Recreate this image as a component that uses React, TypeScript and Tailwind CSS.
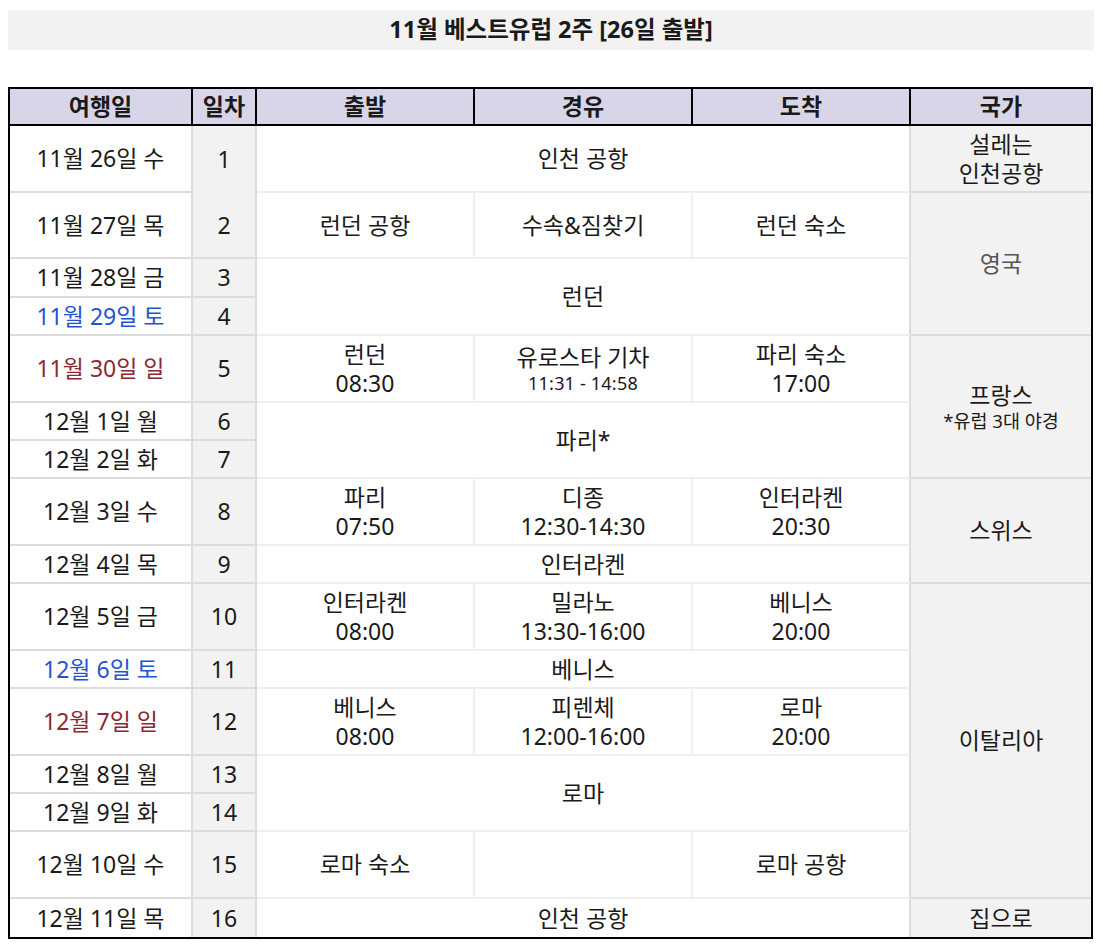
import type { ReactNode } from "react"

type Tone = "black" | "blue" | "red"

const toneClass: Record<Tone, string> = {
  black: "text-[#1a1a1a]",
  blue: "text-[#2354d0]",
  red: "text-[#8c2833]",
}

// base cell: right + bottom borders only, outer frame comes from the table
function Cell({
  children,
  colSpan,
  rowSpan,
  className = "",
}: {
  children?: ReactNode
  colSpan?: number
  rowSpan?: number
  className?: string
}) {
  return (
    <td
      colSpan={colSpan}
      rowSpan={rowSpan}
      className={`p-0 text-center align-middle ${className}`}
    >
      {children}
    </td>
  )
}

function Two({ top, bottom, small }: { top: string; bottom: string; small?: boolean }) {
  return (
    <div className="flex flex-col items-center leading-[29px]">
      <span>{top}</span>
      {small ? (
        <span className="text-[18px] leading-[22px] tracking-[0.2px]">{bottom}</span>
      ) : (
        <span>{bottom}</span>
      )}
    </div>
  )
}

const dateCls = "border-r-2 border-b-2 border-[#dcdcdc]"
const dayCls = "border-r-2 border-b-2 border-[#dcdcdc] bg-[#f2f2f2]"
const midCls = "border-r-2 border-b-2 border-[#efefef]"
const lastMidCls = "border-r-2 border-b-2 border-r-[#dcdcdc] border-b-[#efefef]"
const countryCls = "border-b-2 border-[#dcdcdc] bg-[#f2f2f2]"

function DateCell({ text, tone = "black", h }: { text: string; tone?: Tone; h: string }) {
  return <Cell className={`${dateCls} ${toneClass[tone]} ${h}`}>{text}</Cell>
}

export default function App() {
  return (
    <div
      className="min-h-[946px] bg-white px-2 pt-[10px] text-[#1a1a1a]"
      style={{ fontFamily: '"Noto Sans", "Noto Sans CJK KR", sans-serif' }}
    >
      {/* Title */}
      <div className="flex h-10 items-center justify-center bg-[#f2f2f2] text-[23.5px] font-bold">
        11월 베스트유럽 2주 [26일 출발]
      </div>

      {/* Schedule */}
      <table className="mt-[37px] w-[1085px] table-fixed border-separate border-spacing-0 border-2 border-black text-[23px]">
        <colgroup>
          <col className="w-[183px]" />
          <col className="w-[64px]" />
          <col className="w-[218px]" />
          <col className="w-[218px]" />
          <col className="w-[218px]" />
          <col className="w-[180px]" />
        </colgroup>
        <thead>
          <tr className="bg-[#d9d5e8] font-bold">
            <th className="h-[37px] border-r-2 border-b-2 border-black p-0">여행일</th>
            <th className="border-r-2 border-b-2 border-black p-0">일차</th>
            <th className="border-r-2 border-b-2 border-black p-0">출발</th>
            <th className="border-r-2 border-b-2 border-black p-0">경유</th>
            <th className="border-r-2 border-b-2 border-black p-0">도착</th>
            <th className="border-b-2 border-black p-0">국가</th>
          </tr>
        </thead>
        <tbody>
          <tr>
            <DateCell text="11월 26일 수" h="h-[67px]" />
            <Cell className="border-r-2 border-[#dcdcdc] bg-[#f2f2f2]">1</Cell>
            <Cell colSpan={3} className={lastMidCls}>인천 공항</Cell>
            <Cell className={countryCls}>
              <div className="leading-[29px]">
                설레는
                <br />
                인천공항
              </div>
            </Cell>
          </tr>
          <tr>
            <DateCell text="11월 27일 목" h="h-[66px]" />
            <Cell className={dayCls}>2</Cell>
            <Cell className={midCls}>런던 공항</Cell>
            <Cell className={midCls}>수속&amp;짐찾기</Cell>
            <Cell className={lastMidCls}>런던 숙소</Cell>
            <Cell rowSpan={3} className={`${countryCls} text-[#555555]`}>영국</Cell>
          </tr>
          <tr>
            <DateCell text="11월 28일 금" h="h-[39px]" />
            <Cell className={dayCls}>3</Cell>
            <Cell colSpan={3} rowSpan={2} className={lastMidCls}>런던</Cell>
          </tr>
          <tr>
            <DateCell text="11월 29일 토" tone="blue" h="h-[38px]" />
            <Cell className={dayCls}>4</Cell>
          </tr>
          <tr>
            <DateCell text="11월 30일 일" tone="red" h="h-[67px]" />
            <Cell className={dayCls}>5</Cell>
            <Cell className={midCls}>
              <Two top="런던" bottom="08:30" />
            </Cell>
            <Cell className={midCls}>
              <Two top="유로스타 기차" bottom="11:31 - 14:58" small />
            </Cell>
            <Cell className={lastMidCls}>
              <Two top="파리 숙소" bottom="17:00" />
            </Cell>
            <Cell rowSpan={3} className={countryCls}>
              <div className="flex flex-col items-center">
                <span className="leading-[28px]">프랑스</span>
                <span className="text-[18.5px] leading-[24px]">*유럽 3대 야경</span>
              </div>
            </Cell>
          </tr>
          <tr>
            <DateCell text="12월 1일 월" h="h-[38px]" />
            <Cell className={dayCls}>6</Cell>
            <Cell colSpan={3} rowSpan={2} className={lastMidCls}>파리*</Cell>
          </tr>
          <tr>
            <DateCell text="12월 2일 화" h="h-[38px]" />
            <Cell className={dayCls}>7</Cell>
          </tr>
          <tr>
            <DateCell text="12월 3일 수" h="h-[67px]" />
            <Cell className={dayCls}>8</Cell>
            <Cell className={midCls}>
              <Two top="파리" bottom="07:50" />
            </Cell>
            <Cell className={midCls}>
              <Two top="디종" bottom="12:30-14:30" />
            </Cell>
            <Cell className={lastMidCls}>
              <Two top="인터라켄" bottom="20:30" />
            </Cell>
            <Cell rowSpan={2} className={countryCls}>스위스</Cell>
          </tr>
          <tr>
            <DateCell text="12월 4일 목" h="h-[38px]" />
            <Cell className={dayCls}>9</Cell>
            <Cell colSpan={3} className={lastMidCls}>인터라켄</Cell>
          </tr>
          <tr>
            <DateCell text="12월 5일 금" h="h-[67px]" />
            <Cell className={dayCls}>10</Cell>
            <Cell className={midCls}>
              <Two top="인터라켄" bottom="08:00" />
            </Cell>
            <Cell className={midCls}>
              <Two top="밀라노" bottom="13:30-16:00" />
            </Cell>
            <Cell className={lastMidCls}>
              <Two top="베니스" bottom="20:00" />
            </Cell>
            <Cell rowSpan={6} className={countryCls}>이탈리아</Cell>
          </tr>
          <tr>
            <DateCell text="12월 6일 토" tone="blue" h="h-[38px]" />
            <Cell className={dayCls}>11</Cell>
            <Cell colSpan={3} className={lastMidCls}>베니스</Cell>
          </tr>
          <tr>
            <DateCell text="12월 7일 일" tone="red" h="h-[67px]" />
            <Cell className={dayCls}>12</Cell>
            <Cell className={midCls}>
              <Two top="베니스" bottom="08:00" />
            </Cell>
            <Cell className={midCls}>
              <Two top="피렌체" bottom="12:00-16:00" />
            </Cell>
            <Cell className={lastMidCls}>
              <Two top="로마" bottom="20:00" />
            </Cell>
          </tr>
          <tr>
            <DateCell text="12월 8일 월" h="h-[38px]" />
            <Cell className={dayCls}>13</Cell>
            <Cell colSpan={3} rowSpan={2} className={lastMidCls}>로마</Cell>
          </tr>
          <tr>
            <DateCell text="12월 9일 화" h="h-[38px]" />
            <Cell className={dayCls}>14</Cell>
          </tr>
          <tr>
            <DateCell text="12월 10일 수" h="h-[67px]" />
            <Cell className={dayCls}>15</Cell>
            <Cell className={midCls}>로마 숙소</Cell>
            <Cell className={midCls} />
            <Cell className={lastMidCls}>로마 공항</Cell>
          </tr>
          <tr>
            <Cell className="h-[38px] border-r-2 border-[#dcdcdc]">12월 11일 목</Cell>
            <Cell className="border-r-2 border-[#dcdcdc] bg-[#f2f2f2]">16</Cell>
            <Cell colSpan={3} className="border-r-2 border-[#dcdcdc]">인천 공항</Cell>
            <Cell className="bg-[#f2f2f2]">집으로</Cell>
          </tr>
        </tbody>
      </table>
    </div>
  )
}
